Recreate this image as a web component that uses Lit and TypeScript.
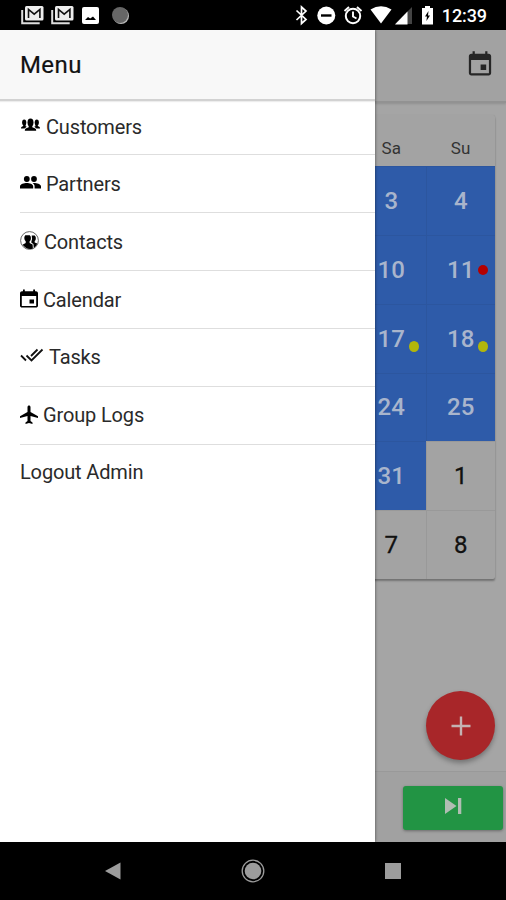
import { LitElement, html, css, svg } from "lit";
import { customElement } from "lit/decorators.js";
import { classMap } from "lit/directives/class-map.js";

const calendarGlyph = svg`<path d="M19 3.500h-1V1.500h-1.800v2h-8.400v-2H6v2H5c-1.100 0-2 .9-2 2v13.500c0 1.100.9 2 2 2h14c1.100 0 2-.9 2-2V5.500c0-1.100-.9-2-2-2zm.2 15.700H4.800V8.500h14.400zM17 12.200h-4.500v4.500h4.500z"/>`;

const glyphs: Record<string, unknown> = {
  customers: svg`<svg class="glyph" width="21" height="20" viewBox="0 0 20 20">
    <ellipse cx="10" cy="6.400" rx="3" ry="4"/><path d="M8.200 8h3.600v3.200l3 1.200q.9.500.9 2.400H4.300q0-1.900.9-2.400l3-1.200z"/>
    <ellipse cx="3.700" cy="6.500" rx="2.100" ry="3"/><ellipse cx="16.300" cy="6.500" rx="2.100" ry="3"/>
    <path d="M2.700 8h2.400v2.300l1.200.5-2.300 1.600H.5q0-1.300.8-1.600l1.400-.7zM17.300 8h-2.400v2.300l-1.200.5 2.300 1.600h3.500q0-1.300-.8-1.600l-1.400-.7z"/></svg>`,
  partners: svg`<svg class="glyph" width="21" height="20" viewBox="0 0 21 20">
    <circle cx="6.800" cy="6" r="2.900"/><circle cx="14" cy="6" r="2.900"/>
    <path d="M6.800 10c2.600 0 6.400 1.200 6.400 3.400V15.500H0v-2.100C0 11.200 4.200 10 6.800 10zM14 10c2.600 0 7 1.200 7 3.400V15.500h-6.400v-2.100c0-1.400-.8-2.500-2-3.300z"/></svg>`,
  contacts: svg`<svg class="glyph" width="19" height="20" viewBox="0 0 19 20">
    <circle cx="9.500" cy="9.500" r="8.900" fill="#fff" stroke="#555" stroke-width=".9"/>
    <path d="M5.200 4.200h4.600q1.500 1.200 1.100 3.700-.3 1.700-1.300 2.300v1.800l3 1.400.3 4q-5.700 2-10.400-3.700l3.200-1.700v-1.700Q4.700 9.500 4.400 8.100q-.5-2.600.8-3.900z"/>
    <path d="M11.700 4.500h3q1.500 1.100 1.100 3.500-.2 1.500-1.100 2.100v1.500l2.600 1q-.9 2.700-3.500 4.300l-.4-3.900-2-1.200v-1.300Q12.500 7.500 11.700 4.500z"/></svg>`,
  calendar: svg`<svg class="glyph" width="18" height="20" viewBox="3 1 18 21.500" preserveAspectRatio="none">${calendarGlyph}</svg>`,
  tasks: svg`<svg class="glyph" width="24" height="20" viewBox="0 0 24 20">
    <path d="M1 8.500l5 5M6.500 8.500l5 5L22.500 2.500M11 9l6.500-6.500" fill="none" stroke="#111" stroke-width="1.800"/></svg>`,
  plane: svg`<svg class="glyph" width="18" height="20" viewBox="3 1.500 18 20" preserveAspectRatio="none">
    <path d="M21 14.500v-1.800l-7.500-4.200V3.500C13.500 2.700 12.800 2 12 2s-1.500.7-1.500 1.500v5L3 12.700v1.800l7.500-2V17.500l-2 1.500V20.500l3.500-1 3.500 1v-1.500l-2-1.500v-5z"/></svg>`,
};

const mail = svg`<svg width="24" height="20" viewBox="0 0 24 20">
  <path d="M1.200 5v13.300h17.500" fill="none" stroke="#ddd" stroke-width="2"/>
  <rect x="4" y="1" width="18.500" height="14.500" rx="1.500" fill="#eee"/>
  <path d="M7.500 13V4.500l5.700 4.700 5.700-4.700V13" fill="none" stroke="#111" stroke-width="1.600"/></svg>`;

interface Entry { icon?: string; label: string; cls: string }
const entries: Entry[] = [
  { icon: "customers", label: "Customers", cls: "first" },
  { icon: "partners", label: "Partners", cls: "" },
  { icon: "contacts", label: "Contacts", cls: "" },
  { icon: "calendar", label: "Calendar", cls: "" },
  { icon: "tasks", label: "Tasks", cls: "up" },
  { icon: "plane", label: "Group Logs", cls: "up" },
  { label: "Logout Admin", cls: "last" },
];

interface Day { n: number; on: boolean; dot?: string }
const days: Day[] = [
  { n: 3, on: true }, { n: 4, on: true },
  { n: 10, on: true }, { n: 11, on: true, dot: "red" },
  { n: 17, on: true, dot: "yellow" }, { n: 18, on: true, dot: "yellow" },
  { n: 24, on: true }, { n: 25, on: true },
  { n: 31, on: true }, { n: 1, on: false },
  { n: 7, on: false }, { n: 8, on: false },
];

@customElement("app-root")
export class AppRoot extends LitElement {
  static styles = css`
    :host { display: flex; flex-direction: column; height: 900px; width: 506px; overflow: hidden; background: #000; font-family: Roboto, sans-serif; }
    * { box-sizing: border-box; }
    svg { display: block; flex: none; }
    .status { height: 30px; flex: none; display: flex; align-items: center; padding: 0 19px 0 21px; color: #fff; }
    .left { display: flex; gap: 6px; align-items: center; flex: 1; }
    .left .pic { margin-left: 1px; }
    .left .disc { margin-left: 6px; }
    .time { font-size: 18px; font-weight: 500; line-height: 30px; padding-top: 2px; letter-spacing: -0.1px; }
    .body { height: 812px; flex: none; position: relative; display: flex; }
    .page { width: 506px; background: #a5a5a5; display: flex; flex-direction: column; align-items: flex-end; }
    .bar { width: 100%; height: 73px; background: #a2a2a2; border-bottom: 2px solid #929292; box-shadow: 0 1px 2px rgba(0,0,0,.13); display: flex; justify-content: flex-end; padding: 19px 13px 0 0; }
    .card { width: 139px; margin: 12px 11px 0 0; height: 464px; display: grid; grid-template-columns: 1fr 1fr; grid-template-rows: 51px repeat(6, 1fr); background: #a3a3a3; box-shadow: 0 2px 2px rgba(0,0,0,.3), 0 0 1px rgba(0,0,0,.12); border-radius: 2px; }
    .wd { text-align: center; font-size: 17px; line-height: 20px; padding-top: 23px; color: #333; letter-spacing: .2px; padding-left: 1px; }
    .day { position: relative; display: flex; align-items: center; justify-content: center; font-size: 24px; color: #111; font-weight: 400; -webkit-text-stroke: .3px #111; border-left: 1px solid #999; border-top: 1px solid #999; }
    .day.on { background: #2e5ba9; color: #a9b5cc; font-weight: 500; -webkit-text-stroke: 0; border-color: #2c569f; }
    .dot { position: absolute; width: 10px; height: 10px; border-radius: 50%; right: 7px; top: 29px; }
    .dot.red { background: #b40000; }
    .dot.yellow { background: #b2b60a; top: 36px; height: 11px; }
    .fab { width: 69px; height: 69px; border-radius: 50%; background: #a82629; margin: 112px 11px 0 0; display: flex; align-items: center; justify-content: center; box-shadow: 0 3px 5px rgba(0,0,0,.3); }
    .foot { margin-top: auto; width: 100%; height: 71px; background: #a1a1a1; border-top: 1px solid #999; display: flex; justify-content: flex-end; padding: 14px 3px 0 0; }
    .next { width: 100px; height: 44px; border-radius: 3px; background: #229444; box-shadow: 0 1px 3px rgba(0,0,0,.35); display: flex; align-items: center; justify-content: center; padding-bottom: 4px; }
    .drawer { position: absolute; left: 0; top: 0; width: 375px; height: 812px; background: #fff; box-shadow: 0 0 3px rgba(0,0,0,.55); clip-path: inset(0 -6px 0 0); }
    .title { height: 71px; background: #f8f8f8; border-bottom: 2px solid #d2d2d2; box-shadow: 0 1px 1px rgba(0,0,0,.07); padding-left: 20px; font-size: 24px; font-weight: 400; -webkit-text-stroke: .2px #111; line-height: 70px; color: #111; letter-spacing: .4px; }
    .list { padding-left: 20px; }
    .item { height: 58px; display: flex; align-items: center; gap: 5px; border-bottom: 1px solid #dedede; font-size: 20px; color: #2a2a2a; letter-spacing: -.15px; line-height: 26px; }
    .item.first { height: 54px; padding-bottom: 2px; }
    .item.up { padding-bottom: 1px; }
    .item.last { border: 0; height: 57px; padding-bottom: 3px; }
    .glyph { fill: #000; margin-bottom: 1px; }
    .nav { height: 58px; flex: none; display: grid; grid-template-columns: repeat(3, 140px); justify-content: center; align-items: center; justify-items: center; }
  `;

  render() {
    return html`
      <div class="status">
        <div class="left">
          ${mail}${mail}
          <svg class="pic" width="17" height="17" viewBox="0 0 17 17"><rect width="17" height="17" rx="2" fill="#fff"/><path d="M3 13l3-3 2.200 1.500L11 9.500l3 3.500z"/></svg>
          <svg class="disc" width="19" height="19" viewBox="0 0 19 19"><circle cx="10" cy="10" r="8" fill="#bbb"/><circle cx="9" cy="9" r="8" fill="#666"/></svg>
        </div>
        <svg width="163" height="30" viewBox="280 0 163 30">
          <path d="M297.500 10.500l9.500 9-4.500 4V7l4.500 4-9.500 9" fill="none" stroke="#fff" stroke-width="1.700"/>
          <circle cx="327.300" cy="15.500" r="9" fill="#fff"/><path d="M322 15.500h10.500" stroke="#000" stroke-width="2.400"/>
          <circle cx="354" cy="16" r="7.200" fill="none" stroke="#fff" stroke-width="2"/>
          <path d="M354 11.500V16.500l3.500 2M345.500 11l4.500-4M362.500 11l-4.500-4" fill="none" stroke="#fff" stroke-width="1.900"/>
          <path d="M371.500 9.500q10.500-6.500 21 0L382 23.500z" fill="#fff"/>
          <path d="M413 7v17h-17z" fill="#444"/><path d="M408.500 11.500V24.500H396z" fill="#fff"/>
          <path d="M423 8h3V6h5v2h3v16.500h-11z" fill="#fff"/><path d="M429.500 11l-3.500 5.500h2l-.6 4.500 3.600-5.500h-2z" fill="#000"/>
        </svg>
        <div class="time">12:39</div>
      </div>
      <div class="body">
        <div class="page">
          <div class="bar"><svg width="26" height="28" viewBox="1.500 0 21 22" fill="#262626">${calendarGlyph}</svg></div>
          <div class="card">
            <div class="wd">Sa</div><div class="wd">Su</div>
            ${days.map((d) => html`<div class=${classMap({ day: true, on: d.on })}>${d.n}${d.dot ? html`<i class="dot ${d.dot}"></i>` : ""}</div>`)}
          </div>
          <div class="fab"><svg width="20" height="20" viewBox="0 0 20 20"><path d="M10 .5v19M.5 10h19" stroke="#c4b2b2" stroke-width="2.400"/></svg></div>
          <div class="foot"><div class="next"><svg width="17" height="16" viewBox="0 0 17 16" fill="#b0bdb3"><path d="M0 0l11.500 8L0 16zM13 0h3.300v16H13z"/></svg></div></div>
        </div>
        <div class="drawer">
          <div class="title">Menu</div>
          <div class="list">
            ${entries.map((e) => html`<div class="item ${e.cls}">${e.icon ? glyphs[e.icon] : ""}<span>${e.label}</span></div>`)}
          </div>
        </div>
      </div>
      <div class="nav">
        <svg width="16" height="18" viewBox="0 0 16 18"><path d="M0 9L15.500 .5v17z" fill="#9c9c9c"/></svg>
        <svg width="24" height="24" viewBox="0 0 24 24"><circle cx="12" cy="12" r="10.800" fill="none" stroke="#9c9c9c" stroke-width="1.300"/><circle cx="12" cy="12" r="8.300" fill="#9c9c9c"/></svg>
        <svg width="16" height="16" viewBox="0 0 16 16"><path d="M0 0h16v16H0z" fill="#9c9c9c"/></svg>
      </div>
    `;
  }
}
